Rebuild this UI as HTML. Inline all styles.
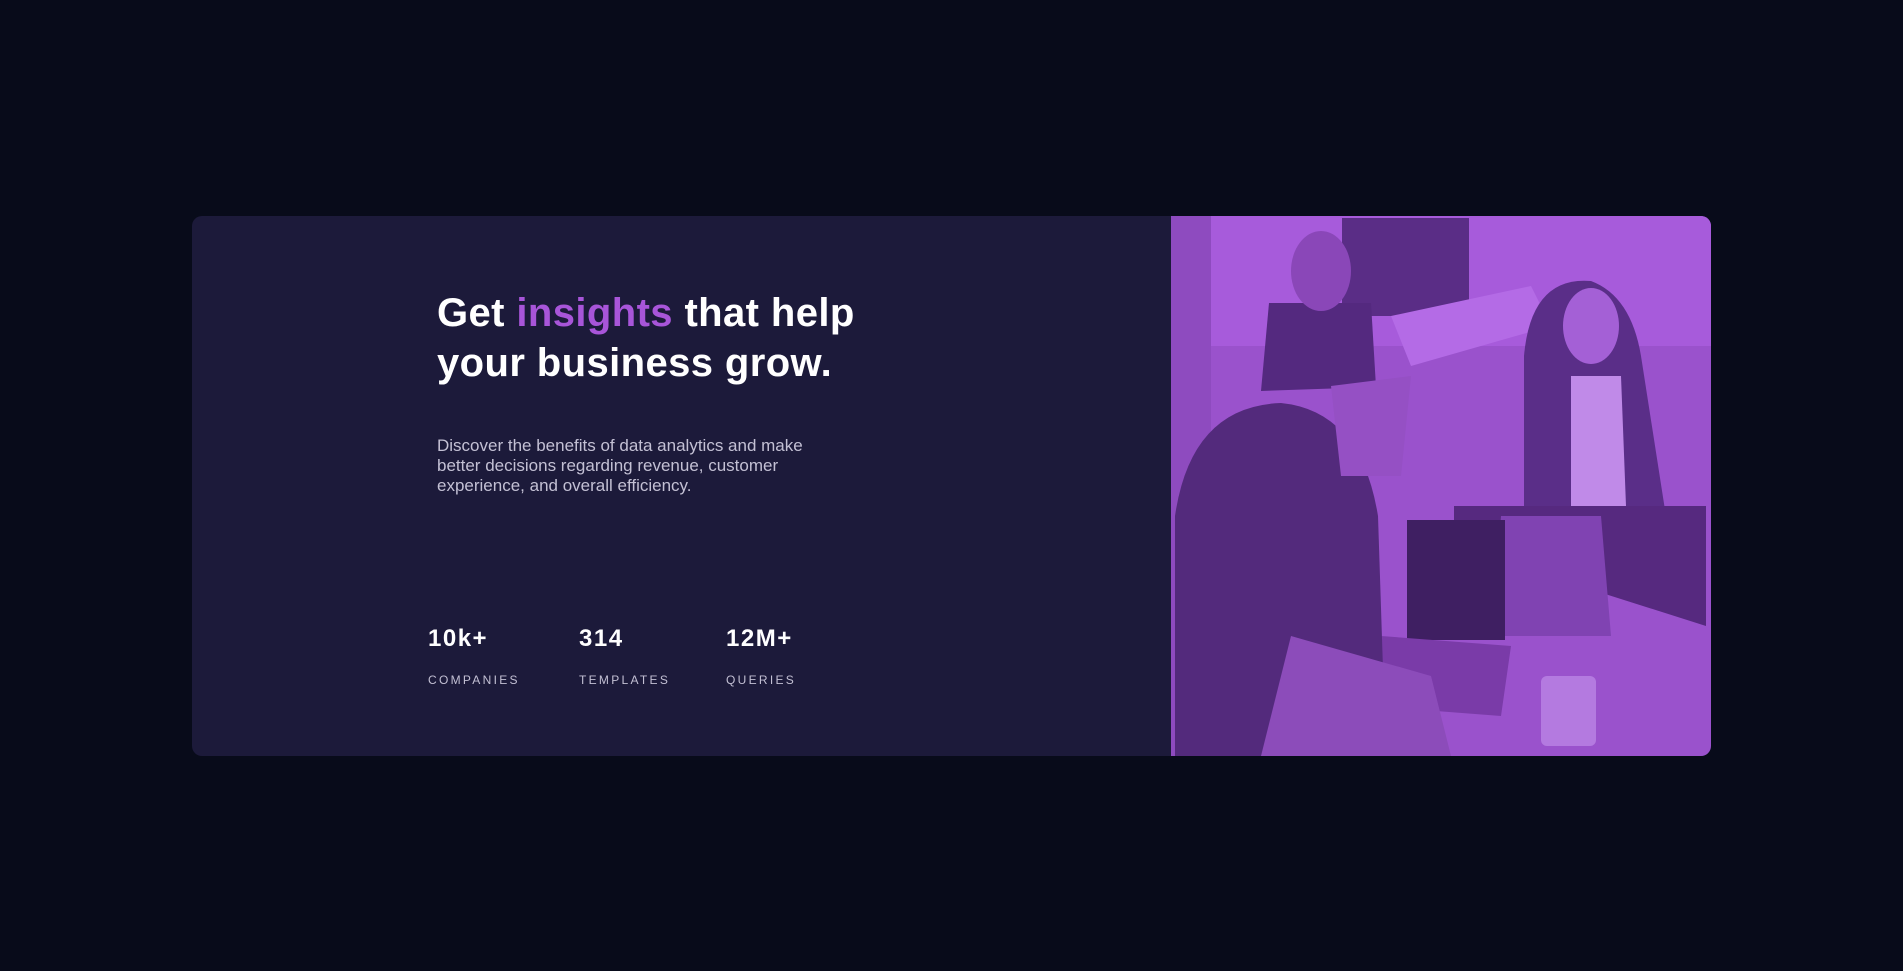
<!DOCTYPE html>
<html><head><meta charset="utf-8"><style>
html,body{margin:0;padding:0;background:#080b1a;width:1903px;height:971px;overflow:hidden;font-family:"Liberation Sans",sans-serif}
.card{position:absolute;left:192px;top:216px;width:1519px;height:540px;background:#1c1a3a;border-radius:10px;overflow:hidden}
.img{position:absolute;left:979px;top:0;width:540px;height:540px}
h1{position:absolute;left:245px;top:72px;margin:0;font-size:40px;line-height:50px;font-weight:700;color:#fff;letter-spacing:0.4px}
h1 span{color:#a855d9}
p{position:absolute;left:245px;top:220px;margin:0;width:410px;font-size:17px;line-height:20px;color:#c3c0d4}
.stat{position:absolute;top:408px;color:#fff}
.stat b{display:block;font-size:24px;line-height:30px;font-weight:700;letter-spacing:1.5px}
.stat i{display:block;font-style:normal;font-size:12px;letter-spacing:2.3px;color:#c3c0d4;margin-top:19px}
</style></head><body>
<div class="card">
<h1>Get <span>insights</span> that help<br>your business grow.</h1>
<p>Discover the benefits of data analytics and make better decisions regarding revenue, customer experience, and overall efficiency.</p>
<div class="stat" style="left:236px"><b>10k+</b><i>COMPANIES</i></div>
<div class="stat" style="left:387px"><b>314</b><i>TEMPLATES</i></div>
<div class="stat" style="left:534px"><b>12M+</b><i>QUERIES</i></div>
<svg class="img" viewBox="0 0 540 540" xmlns="http://www.w3.org/2000/svg">
<rect width="540" height="540" fill="#9a52cc"/>
<rect x="0" y="0" width="540" height="130" fill="#a75bdb"/>
<rect x="0" y="0" width="40" height="540" fill="#8e4bbf"/>
<rect x="171" y="2" width="127" height="98" fill="#5a2d86"/>
<path d="M98 87 L200 87 L205 171 L90 175 Z" fill="#54297f"/>
<ellipse cx="150" cy="55" rx="30" ry="40" fill="#8a47b8"/>
<path d="M220 100 L360 70 L380 110 L240 150 Z" fill="#b46be6"/>
<path d="M353 140 Q360 60 420 65 Q460 80 470 140 L494 294 L353 294 Z" fill="#5a2e88"/>
<path d="M400 160 L450 160 L455 290 L400 290 Z" fill="#c08ae8"/>
<ellipse cx="420" cy="110" rx="28" ry="38" fill="#a460d6"/>
<path d="M283 290 L535 290 L535 410 L283 330 Z" fill="#56297f"/>
<path d="M330 300 L430 300 L440 420 L320 420 Z" fill="#8043b2"/>
<rect x="236" y="304" width="98" height="120" fill="#3f1f62"/>
<path d="M210 420 L340 430 L330 500 L200 490 Z" fill="#7a3ba8"/>
<path d="M4 545 L4 300 Q20 190 110 187 Q190 195 207 300 L215 545 Z" fill="#532a7c"/>
<path d="M120 420 L260 460 L280 540 L90 540 Z" fill="#8c4cba"/>
<rect x="370" y="460" width="55" height="70" rx="6" fill="#b47ae0"/>
<path d="M160 170 L240 160 L230 260 L170 260 Z" fill="#9550c4"/>
</svg>
</div>
</body></html>
